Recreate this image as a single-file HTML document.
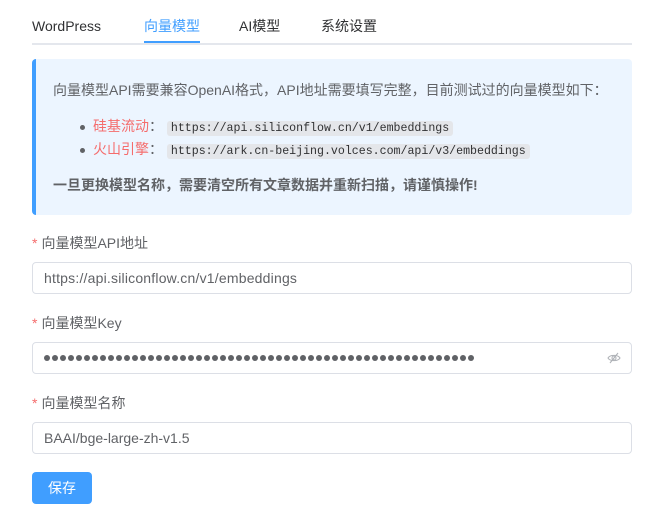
<!DOCTYPE html>
<html><head><meta charset="utf-8"><style>
*{margin:0;padding:0;box-sizing:border-box}
body{width:672px;height:527px;background:#fff;font-family:"Liberation Sans","Noto Sans CJK SC",sans-serif;color:#303133;position:relative;overflow:hidden}
.abs{position:absolute}
.tabs{left:32px;top:0;width:600px;height:45px;border-bottom:2px solid #e4e7ed}
.tab{position:absolute;top:17px;font-size:14px;line-height:18px;color:#303133}
.act{color:#409eff}
.bar{position:absolute;left:112px;top:41px;width:56px;height:2px;background:#409eff}
.alert{left:32px;top:59px;width:600px;height:156px;background:#ecf5ff;border-left:4px solid #409eff;border-radius:4px}
.t{position:absolute;font-size:14px;color:#606266;white-space:nowrap;line-height:18px}
.red{color:#f56c6c}
code{font-family:"Liberation Mono",monospace;font-size:11.6px;background:#e4e6ea;padding:1px 4px;border-radius:3px;color:#303133}
.dot{display:inline-block;width:5px;height:5px;border-radius:50%;background:#606266;margin-right:8px;vertical-align:middle}
.lbl{position:absolute;left:32px;font-size:14px;color:#606266;line-height:18px}
.lbl span{color:#f56c6c;margin-right:4px}
.inp{position:absolute;left:32px;width:600px;height:32px;border:1px solid #dcdfe6;border-radius:4px;font-size:14px;color:#606266;padding-left:11px;line-height:30px;white-space:nowrap;overflow:hidden}
.pw{display:flex;align-items:center;gap:2px;height:30px}
.pw i{display:block;width:6px;height:6px;border-radius:50%;background:#606266}
.btn{left:32px;top:472px;width:60px;height:32px;background:#409eff;border-radius:4px;color:#fff;font-size:14px;text-align:center;line-height:32px}
</style></head><body>
<div class="abs tabs">
<div class="tab" style="left:0">WordPress</div>
<div class="tab act" style="left:112px">向量模型</div>
<div class="tab" style="left:207px">AI模型</div>
<div class="tab" style="left:289px">系统设置</div>
<div class="bar"></div>
</div>
<div class="abs alert">
<div class="t" style="left:17px;top:22px">向量模型API需要兼容OpenAI格式，API地址需要填写完整，目前测试过的向量模型如下：</div>
<div class="t" style="left:44px;top:58px"><span class="dot"></span><span class="red">硅基流动</span>： <code>https://api.siliconflow.cn/v1/embeddings</code></div>
<div class="t" style="left:44px;top:81px"><span class="dot"></span><span class="red">火山引擎</span>： <code>https://ark.cn-beijing.volces.com/api/v3/embeddings</code></div>
<div class="t" style="left:17px;top:117px;font-weight:bold">一旦更换模型名称，需要清空所有文章数据并重新扫描，请谨慎操作!</div>
</div>
<div class="lbl" style="top:234px"><span>*</span>向量模型API地址</div>
<div class="inp" style="top:262px;letter-spacing:0.2px">https://api.siliconflow.cn/v1/embeddings</div>
<div class="lbl" style="top:314px"><span>*</span>向量模型Key</div>
<div class="inp" style="top:342px"><div class="pw"><i></i><i></i><i></i><i></i><i></i><i></i><i></i><i></i><i></i><i></i><i></i><i></i><i></i><i></i><i></i><i></i><i></i><i></i><i></i><i></i><i></i><i></i><i></i><i></i><i></i><i></i><i></i><i></i><i></i><i></i><i></i><i></i><i></i><i></i><i></i><i></i><i></i><i></i><i></i><i></i><i></i><i></i><i></i><i></i><i></i><i></i><i></i><i></i><i></i><i></i><i></i><i></i><i></i><i></i></div>
<svg style="position:absolute;right:10px;top:8px" width="14" height="14" viewBox="0 0 14 14" fill="none" stroke="#b0b3b8" stroke-width="1.1"><path d="M1 7c2-3.5 10-3.5 12 0c-2 3.5-10 3.5-12 0z"/><circle cx="7" cy="7" r="2"/><path d="M11 2L3 12"/></svg></div>
<div class="lbl" style="top:394px"><span>*</span>向量模型名称</div>
<div class="inp" style="top:422px">BAAI/bge-large-zh-v1.5</div>
<div class="abs btn">保存</div>
</body></html>
